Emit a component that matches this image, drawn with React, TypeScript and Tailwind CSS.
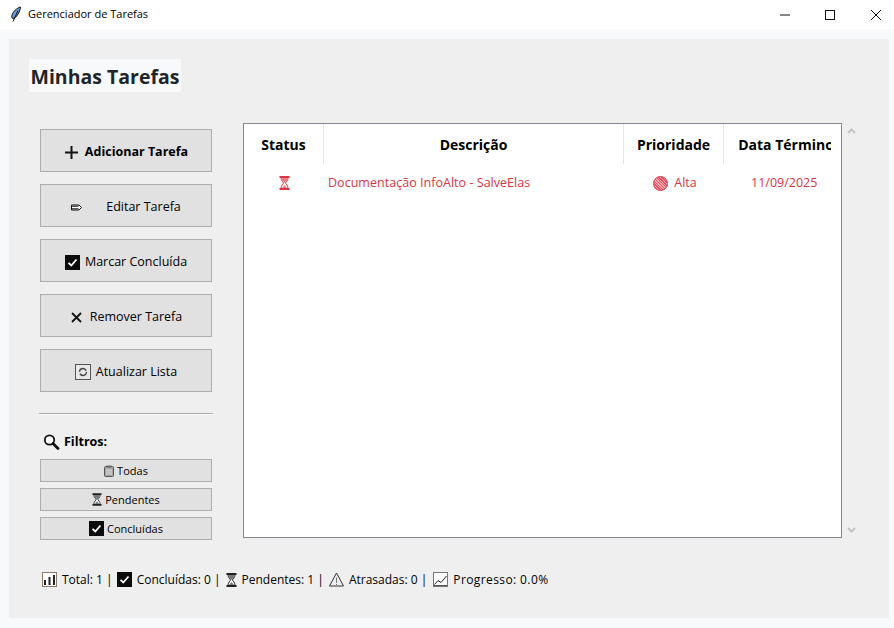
import type { ReactNode } from "react";

const font = "font-['Open_Sans','Noto_Sans',sans-serif]";

function Feather() {
  return (
    <svg width="12" height="17" viewBox="0 0 12 17" fill="none">
      <path d="M10.5 1C7 2 3 5 1.8 10c-.3 1.5.3 2.5 1.2 2.5C6.500 12 10 6 10.500 1Z" fill="#6f9bd8" stroke="#111" strokeWidth="1" />
      <path d="M8 4.500 3 15.500" stroke="#111" strokeWidth="1" />
    </svg>
  );
}

function CheckBox({ size = 15 }: { size?: number }) {
  return (
    <svg width={size} height={size} viewBox="0 0 15 15">
      <rect width="15" height="15" fill="#0b0b0b" />
      <path d="M3.500 7.800 6.300 10.500 11.500 4.500" fill="none" stroke="#fff" strokeWidth="1.800" />
    </svg>
  );
}

function Hourglass({ color = "#222", sand = "#777", w = 11, h = 14 }: { color?: string; sand?: string; w?: number; h?: number }) {
  return (
    <svg width={w} height={h} viewBox="0 0 11 14" fill="none">
      <path d="M2 1.500C2 5 4.500 6 4.500 7S2 9 2 12.500h7C9 9 6.500 8 6.500 7S9 5 9 1.500Z" fill="#fff" stroke={color} strokeWidth="1" />
      <path d="M2.200 1.500h6.600C8.800 5 6 6 5.500 7 5 6 2.200 5 2.200 1.500Z" fill={sand} />
      <path d="M5.500 9 3 12h5Z" fill={sand} />
      <path d="M.5 1h10M.5 13h10" stroke={color} strokeWidth="2" />
    </svg>
  );
}

function Refresh() {
  return (
    <svg width="16" height="16" viewBox="0 0 16 16" fill="none">
      <rect x=".5" y=".5" width="15" height="15" fill="#e8e8e8" stroke="#555" />
      <circle cx="8" cy="8" r="3.500" stroke="#444" strokeWidth="1.400" strokeDasharray="9 2" />
    </svg>
  );
}

function Search() {
  return (
    <svg width="17" height="16" viewBox="0 0 17 16" fill="none">
      <circle cx="6.500" cy="6" r="4.700" fill="#fff" stroke="#111" strokeWidth="1.800" />
      <path d="m10 9.500 5 5" stroke="#111" strokeWidth="2.800" strokeLinecap="round" />
    </svg>
  );
}

function Notepad() {
  return (
    <svg width="10" height="12" viewBox="0 0 10 12" fill="none">
      <rect x=".5" y="1.500" width="9" height="10" rx="1" fill="#a5a5a5" stroke="#555" />
      <rect x="2.500" y=".5" width="5" height="2" fill="#666" />
      <path d="M2 5h6M2 7h6M2 9h6" stroke="#e2e2e2" />
    </svg>
  );
}

function Pencil() {
  return (
    <svg width="11" height="7" viewBox="0 0 11 7" fill="none">
      <path d="M.5 1h7.500L10.500 3.500 8 6H.5Z" fill="#fff" stroke="#111" />
      <path d="M1 2.200h6.500M1 4.800h6.500" stroke="#111" />
    </svg>
  );
}

function BarChart() {
  return (
    <svg width="15" height="15" viewBox="0 0 15 15" fill="none">
      <rect x=".5" y=".5" width="14" height="14" fill="#fff" stroke="#8a7a66" />
      <path d="M3 13V8M7.500 13V5M12 13V3" stroke="#222" strokeWidth="2" />
    </svg>
  );
}

function Warning() {
  return (
    <svg width="15" height="15" viewBox="0 0 15 15" fill="none">
      <path d="M7.500 1 14.500 14H.5Z" stroke="#333" strokeLinejoin="round" />
      <path d="M7.500 5.500V11M7.500 12v1" stroke="#777" />
    </svg>
  );
}

function LineChart() {
  return (
    <svg width="15" height="15" viewBox="0 0 15 15" fill="none">
      <rect x=".5" y=".5" width="14" height="14" fill="#fff" stroke="#777" />
      <path d="M1.500 12.500 5 8.500 8 10.500 13.500 4" stroke="#222" />
      <path d="M1 13.500h13" stroke="#555" />
    </svg>
  );
}

function ActionButton({ icon, children, className = "" }: { icon: ReactNode; children: ReactNode; className?: string }) {
  return (
    <button className={`flex h-[43px] w-[172px] items-center justify-center border border-[#adadad] bg-[#e1e1e1] pt-[3px] text-[12.500px] text-black ${className}`}>
      {icon}
      {children}
    </button>
  );
}

function FilterButton({ icon, label }: { icon: ReactNode; label: string }) {
  return (
    <button className="flex h-[23px] w-[172px] items-center justify-center gap-[3px] border border-[#adadad] bg-[#e1e1e1] pt-[1px] text-[11px] text-black">
      {icon}
      {label}
    </button>
  );
}

export default function App() {
  return (
    <div className={`flex h-[628px] w-[894px] flex-col overflow-hidden bg-[#f8f9fa] ${font}`}>
      <div className="flex h-[29px] shrink-0 items-center bg-white pl-[10px]">
        <Feather />
        <span className="ml-[6px] text-[11px] text-black">Gerenciador de Tarefas</span>
        <div className="ml-auto flex items-center">
          <svg width="45" height="12" viewBox="0 0 45 12">
            <path d="M21 6h10" stroke="#111" />
          </svg>
          <svg width="45" height="12" viewBox="0 0 45 12">
            <rect x="21.500" y="1.500" width="9" height="9" fill="none" stroke="#111" />
          </svg>
          <svg width="45" height="12" viewBox="0 0 45 12">
            <path d="M22 1l10 10M32 1 22 11" stroke="#111" />
          </svg>
        </div>
      </div>

      <main className="mx-[9px] mt-[10px] flex h-[579px] w-[880px] flex-col bg-[#efefef] pl-[20px] pt-[20px]">
        <h1 className="flex h-[33px] w-[152px] items-center justify-center whitespace-nowrap bg-[#f8f9fa] pt-[3px] text-[19.500px] font-bold text-[#212529]">
          Minhas Tarefas
        </h1>

        <div className="mt-[31px] flex pl-[10px]">
          <aside className="flex w-[174px] flex-col items-center pt-[6px]">
            <div className="flex flex-col gap-[12px]">
              <ActionButton className="gap-[6px] font-bold" icon={<svg width="15" height="15" viewBox="0 0 15 15"><path d="M7.500 1v13M1 7.500h13" stroke="#111" strokeWidth="2" /></svg>}>
                Adicionar Tarefa
              </ActionButton>
              <ActionButton className="gap-[24px]" icon={<Pencil />}>Editar Tarefa</ActionButton>
              <ActionButton className="gap-[5px]" icon={<CheckBox />}>Marcar Concluída</ActionButton>
              <ActionButton className="gap-[7px]" icon={<svg width="13" height="13" viewBox="0 0 13 13"><path d="m2 2 9 9M11 2l-9 9" stroke="#111" strokeWidth="1.800" /></svg>}>
                Remover Tarefa
              </ActionButton>
              <ActionButton className="gap-[5px]" icon={<Refresh />}>Atualizar Lista</ActionButton>
            </div>
            <div className="mt-[21px] h-[2px] w-[174px] border-t border-[#a8a8a8] bg-white" />
            <div className="mt-[18px] flex w-full items-center gap-[4px] self-start pl-[4px] text-[12.500px] font-bold text-black">
              <Search />
              Filtros:
            </div>
            <div className="mt-[7px] flex flex-col gap-[6px]">
              <FilterButton icon={<Notepad />} label="Todas" />
              <FilterButton icon={<Hourglass w={10} h={13} />} label="Pendentes" />
              <FilterButton icon={<CheckBox size={15} />} label="Concluídas" />
            </div>
          </aside>

          <section className="ml-[30px] h-[415px] w-[599px] border border-[#828790] bg-white">
            <div className="w-[587px] overflow-hidden">
              <div className="grid h-[40px] w-[604px] grid-cols-[80px_300px_100px_124px] text-[14px] font-bold text-black">
                <div className="flex items-center justify-center border-r border-[#e5e5e5]">Status</div>
                <div className="flex items-center justify-center border-r border-[#e5e5e5]">Descrição</div>
                <div className="flex items-center justify-center border-r border-[#e5e5e5]">Prioridade</div>
                <div className="flex items-center justify-center whitespace-nowrap">Data Término</div>
              </div>
              <div className="grid h-[38px] w-[604px] grid-cols-[80px_300px_100px_124px] items-center text-[12.500px] text-[#dc3545]">
                <div className="flex justify-center"><Hourglass color="#dc3545" sand="#e8808a" /></div>
                <div className="pl-[4px] tracking-[0.03px]">Documentação InfoAlto - SalveElas</div>
                <div className="flex items-center justify-center gap-[6px] pl-[2px]">
                  <span className="h-[15px] w-[15px] rounded-full border border-[#dc3545] bg-[repeating-linear-gradient(45deg,#e9536a_0px,#e9536a_1px,#f6a9a9_1px,#f6a9a9_2px)]" />
                  Alta
                </div>
                <div className="pl-[27px]">11/09/2025</div>
              </div>
            </div>
          </section>

          <div className="flex h-[415px] w-[18px] flex-col items-center justify-between py-[5px] text-[#c4c4c4]">
            <svg width="9" height="6" viewBox="0 0 9 6" fill="none"><path d="m1 5 3.500-3.500L8 5" stroke="currentColor" strokeWidth="2" /></svg>
            <svg width="9" height="6" viewBox="0 0 9 6" fill="none"><path d="m1 1 3.500 3.500L8 1" stroke="currentColor" strokeWidth="2" /></svg>
          </div>
        </div>

        <footer className="mt-[31px] flex items-center pl-[13px] text-[12px] text-black">
          <BarChart />
          <span className="ml-[5px]">Total: 1 |</span>
          <span className="ml-[4px]"><CheckBox /></span>
          <span className="ml-[5px]">Concluídas: 0 |</span>
          <span className="ml-[5px]"><Hourglass w={11} h={14} /></span>
          <span className="ml-[5px]">Pendentes: 1 |</span>
          <span className="ml-[5px]"><Warning /></span>
          <span className="ml-[5px]">Atrasadas: 0 |</span>
          <span className="ml-[6px]"><LineChart /></span>
          <span className="ml-[5px] tracking-[0.4px]">Progresso: 0.0%</span>
        </footer>
      </main>
    </div>
  );
}
